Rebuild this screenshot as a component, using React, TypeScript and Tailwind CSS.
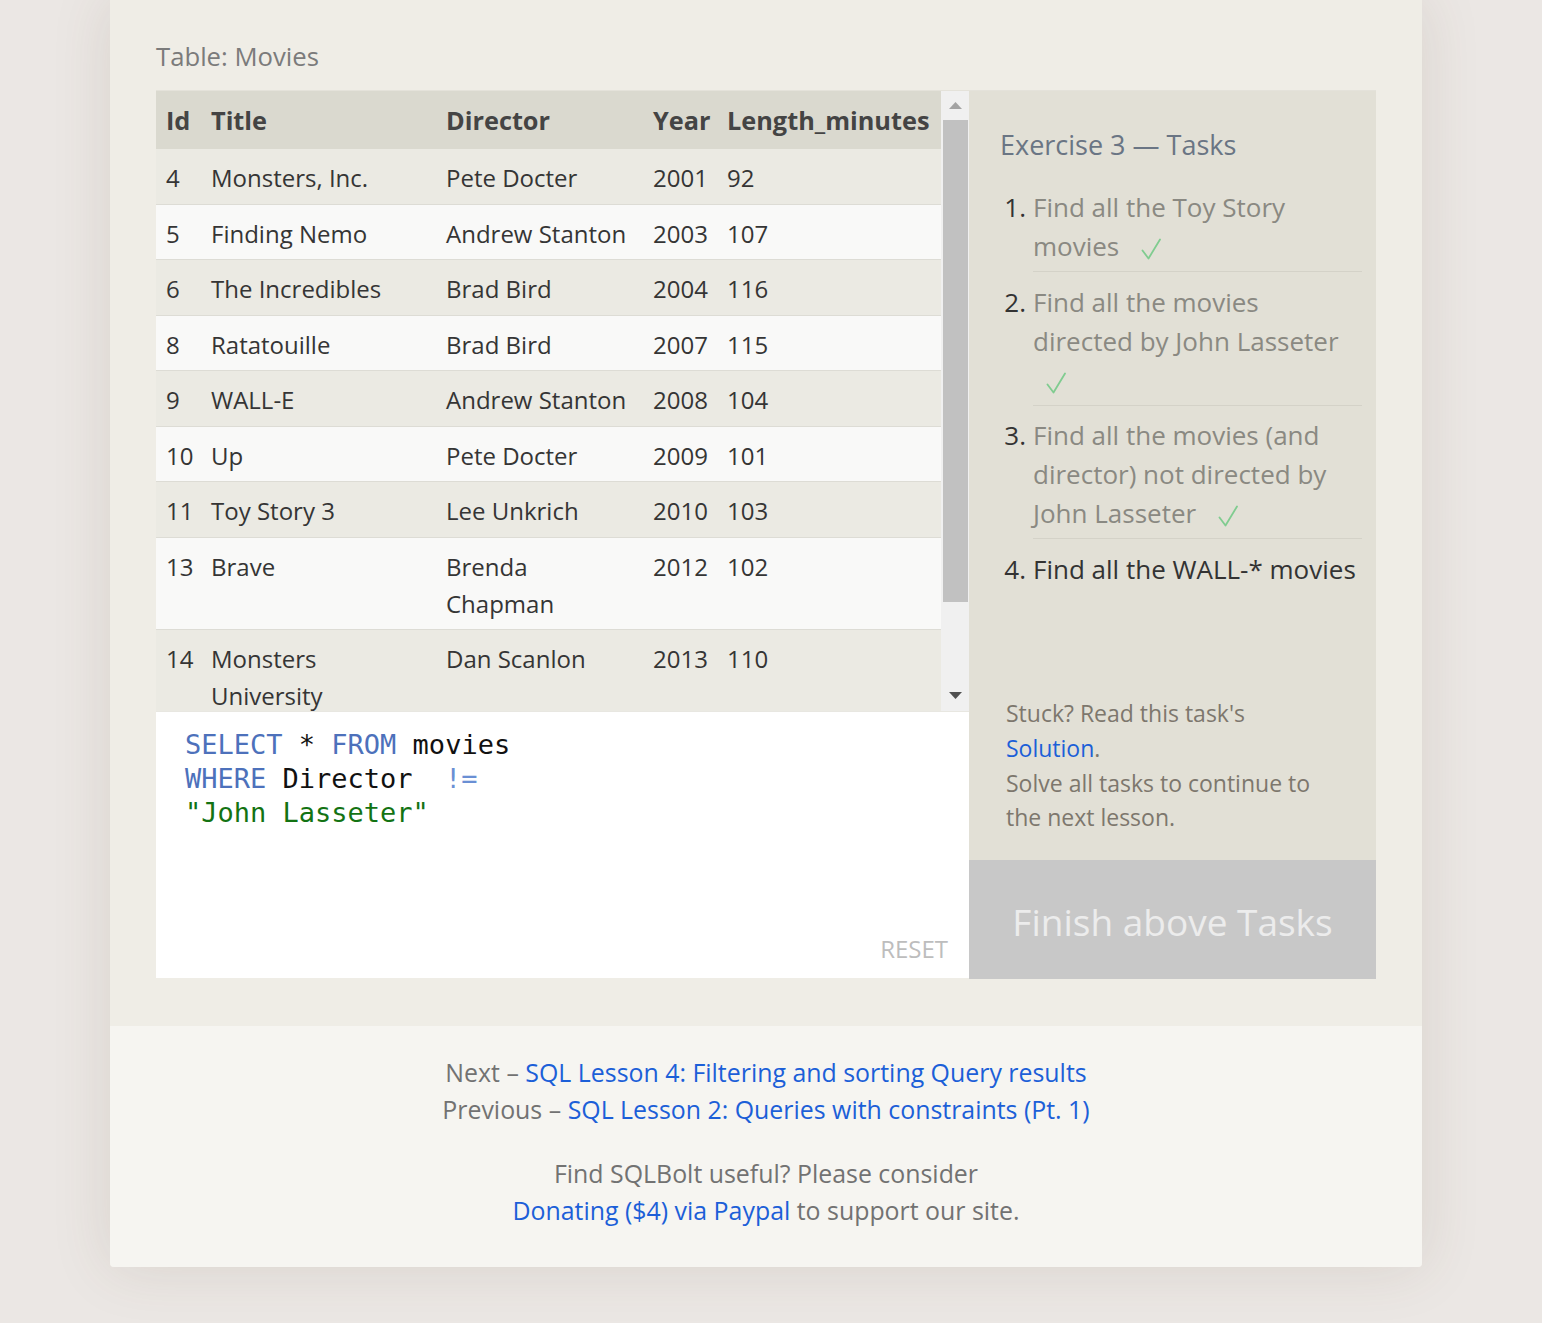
import React from "react";

const rows: { id: string; title: string[]; director: string[]; year: string; len: string }[] = [
  { id: "4", title: ["Monsters, Inc."], director: ["Pete Docter"], year: "2001", len: "92" },
  { id: "5", title: ["Finding Nemo"], director: ["Andrew Stanton"], year: "2003", len: "107" },
  { id: "6", title: ["The Incredibles"], director: ["Brad Bird"], year: "2004", len: "116" },
  { id: "8", title: ["Ratatouille"], director: ["Brad Bird"], year: "2007", len: "115" },
  { id: "9", title: ["WALL-E"], director: ["Andrew Stanton"], year: "2008", len: "104" },
  { id: "10", title: ["Up"], director: ["Pete Docter"], year: "2009", len: "101" },
  { id: "11", title: ["Toy Story 3"], director: ["Lee Unkrich"], year: "2010", len: "103" },
  { id: "13", title: ["Brave"], director: ["Brenda", "Chapman"], year: "2012", len: "102" },
  { id: "14", title: ["Monsters", "University"], director: ["Dan Scanlon"], year: "2013", len: "110" },
];

function Check({ className }: { className: string }) {
  return (
    <svg
      width="20"
      height="22"
      viewBox="0 0 20 22"
      className={className}
      fill="none"
      stroke="#80cc90"
      strokeWidth="1.8"
      strokeLinecap="round"
      strokeLinejoin="round"
    >
      <path d="M1.5 12.5 L7.5 20.5 L19 1.5" />
    </svg>
  );
}

function Lines({ lines }: { lines: string[] }) {
  return (
    <>
      {lines.map((l, i) => (
        <React.Fragment key={i}>
          {i > 0 && <br />}
          {l}
        </React.Fragment>
      ))}
    </>
  );
}

export default function App() {
  return (
    <div className="min-h-[1323px] bg-[#ebe7e4] font-['Open_Sans',sans-serif]">
      <div className="ml-[110px] w-[1312px] rounded-b-[4px] bg-[#efede6] shadow-[0_0_60px_rgba(90,70,50,0.13)]">
        <div className="px-[46px] pt-[38px] pb-[47px]">
          <div className="text-[25.7px] leading-[37px] text-[#7b7b7b]">Table: Movies</div>
          <div className="mt-[15px] flex border-t border-[#e4e2da]">
            {/* left column */}
            <div className="flex w-[813px] flex-col pb-[1px]">
              <div className="flex h-[620px]">
                <div className="w-[785px] overflow-hidden">
                  <table className="w-[785px] table-fixed border-collapse text-left text-[24px] leading-[37px] text-[#353535]">
                    <colgroup>
                      <col className="w-[45px]" />
                      <col className="w-[235px]" />
                      <col className="w-[207px]" />
                      <col className="w-[74px]" />
                      <col className="w-[224px]" />
                    </colgroup>
                    <thead>
                      <tr className="bg-[#dad9cf] text-[25.3px] text-[#444]">
                        <th className="pl-[10px] pt-[11px] pb-[10px] font-bold">Id</th>
                        <th className="pl-[10px] pt-[11px] pb-[10px] font-bold">Title</th>
                        <th className="pl-[10px] pt-[11px] pb-[10px] font-bold">Director</th>
                        <th className="pl-[10px] pt-[11px] pb-[10px] font-bold">Year</th>
                        <th className="pl-[10px] pt-[11px] pb-[10px] font-bold whitespace-nowrap">Length_minutes</th>
                      </tr>
                    </thead>
                    <tbody>
                      {rows.map((r, i) => (
                        <tr
                          key={r.id}
                          className={
                            (i % 2 === 0 ? "bg-[#ebeae3]" : "bg-[#f9f9f8]") +
                            " border-b border-[#dddcd5]"
                          }
                        >
                          <td className="pl-[10px] pt-[10px] pb-[7.5px] align-top">{r.id}</td>
                          <td className="pl-[10px] pt-[10px] pb-[7.5px] align-top">
                            <Lines lines={r.title} />
                          </td>
                          <td className="pl-[10px] pt-[10px] pb-[7.5px] align-top">
                            <Lines lines={r.director} />
                          </td>
                          <td className="pl-[10px] pt-[10px] pb-[7.5px] align-top">{r.year}</td>
                          <td className="pl-[10px] pt-[10px] pb-[7.5px] align-top">{r.len}</td>
                        </tr>
                      ))}
                    </tbody>
                  </table>
                </div>
                {/* scrollbar */}
                <div className="flex w-[28px] flex-col bg-[#f0f0f0]">
                  <div className="flex h-[29px] items-center justify-center">
                    <svg width="13" height="7" viewBox="0 0 13 7">
                      <path d="M0 7 L6.5 0 L13 7 Z" fill="#a3a3a3" />
                    </svg>
                  </div>
                  <div className="ml-[2px] mr-[1px] h-[482px] bg-[#c1c1c1]" />
                  <div className="flex-1" />
                  <div className="flex h-[31px] items-center justify-center">
                    <svg width="13" height="7" viewBox="0 0 13 7">
                      <path d="M0 0 L13 0 L6.5 7 Z" fill="#505050" />
                    </svg>
                  </div>
                </div>
              </div>
              {/* editor */}
              <div className="flex h-[267px] flex-col border-t border-[#e8e7e1] bg-white pl-[29px] pr-[21px] pt-[16px] pb-[14px]">
                <pre className="font-['DejaVu_Sans_Mono',monospace] text-[27px] leading-[34px] text-[#111]">
                  <span className="text-[#4d71bb]">SELECT</span> * <span className="text-[#4d71bb]">FROM</span> movies
                  {"\n"}
                  <span className="text-[#4d71bb]">WHERE</span> Director  <span className="text-[#6a8fd4]">!=</span>
                  {"\n"}
                  <span className="text-[#137313]">"John Lasseter"</span>
                </pre>
                <div className="mt-auto self-end text-[24px] leading-[30px] text-[#bdbdbd]">RESET</div>
              </div>
            </div>
            {/* right panel */}
            <div className="flex w-[407px] flex-col bg-[#e2e0d6]">
              <div className="pl-[31px] pt-[36px] text-[27px] leading-[36px] text-[#6a7584]">
                Exercise 3 — Tasks
              </div>
              <ul className="mt-[14.5px] pl-[30px] pr-[14px] text-[26px] leading-[39px]">
                <li className="flex">
                  <div className="w-[34px] shrink-0 pr-[7px] pt-[10.5px] text-right text-[#333]">1.</div>
                  <div className="flex-1 border-b border-[#d4d2c8] pt-[10.5px] pb-[5px] text-[#8a8982]">
                    Find all the Toy Story
                    <br />
                    movies
                    <Check className="ml-[22px] inline-block align-middle" />
                  </div>
                </li>
                <li className="flex">
                  <div className="w-[34px] shrink-0 pr-[7px] pt-[10.5px] text-right text-[#333]">2.</div>
                  <div className="flex-1 border-b border-[#d4d2c8] pt-[10.5px] pb-[5px] text-[#8a8982]">
                    Find all the movies
                    <br />
                    directed by John Lasseter
                    <br />
                    <Check className="ml-[13px] inline-block align-middle" />
                  </div>
                </li>
                <li className="flex">
                  <div className="w-[34px] shrink-0 pr-[7px] pt-[10.5px] text-right text-[#333]">3.</div>
                  <div className="flex-1 border-b border-[#d4d2c8] pt-[10.5px] pb-[5px] text-[#8a8982]">
                    Find all the movies (and
                    <br />
                    director) not directed by
                    <br />
                    John Lasseter
                    <Check className="ml-[22px] inline-block align-middle" />
                  </div>
                </li>
                <li className="flex">
                  <div className="w-[34px] shrink-0 pr-[7px] pt-[10.5px] text-right text-[#333]">4.</div>
                  <div className="flex-1 pt-[10.5px] pb-[5px] whitespace-nowrap text-[#333]">
                    Find all the WALL-* movies
                  </div>
                </li>
              </ul>
              <div className="mt-auto pl-[37px] pr-[20px] pb-[25px] text-[23px] leading-[34.7px] text-[#7d776d]">
                Stuck? Read this task's
                <br />
                <a className="text-[#1c5fd8]">Solution</a>.
                <br />
                Solve all tasks to continue to
                <br />
                the next lesson.
              </div>
              <div className="flex h-[119px] items-center justify-center bg-[#c8c8c8] pt-[5px] text-[37px] text-[#ececec]">
                Finish above Tasks
              </div>
            </div>
          </div>
        </div>
        {/* footer */}
        <div className="rounded-b-[4px] bg-[#f6f5f1] pt-[28px] pb-[38px] text-center text-[24.9px] leading-[37px] text-[#727272]">
          <p>
            Next – <a className="text-[#1c5fd8]">SQL Lesson 4: Filtering and sorting Query results</a>
          </p>
          <p>
            Previous – <a className="text-[#1c5fd8]">SQL Lesson 2: Queries with constraints (Pt. 1)</a>
          </p>
          <p className="mt-[27px]">
            Find SQLBolt useful? Please consider
            <br />
            <a className="text-[#1c5fd8]">Donating ($4) via Paypal</a> to support our site.
          </p>
        </div>
      </div>
    </div>
  );
}
